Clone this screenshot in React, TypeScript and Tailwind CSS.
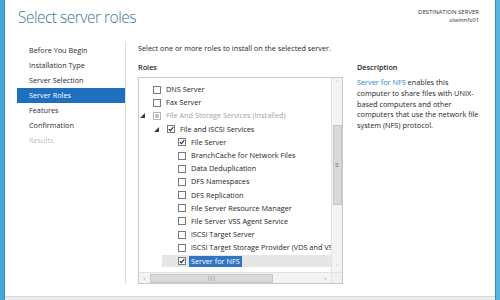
import React from "react";

const font = { fontFamily: '"Open Sans", "Noto Sans", "Liberation Sans", sans-serif' };

type Row = {
  label: string;
  level: number;
  state: "off" | "on" | "mixed";
  expander?: boolean;
  dim?: boolean;
  selected?: boolean;
};

const rows: Row[] = [
  { label: "DNS Server", level: 0, state: "off" },
  { label: "Fax Server", level: 0, state: "off" },
  { label: "File And Storage Services (Installed)", level: 0, state: "mixed", expander: true, dim: true },
  { label: "File and iSCSI Services", level: 1, state: "on", expander: true },
  { label: "File Server", level: 2, state: "on" },
  { label: "BranchCache for Network Files", level: 2, state: "off" },
  { label: "Data Deduplication", level: 2, state: "off" },
  { label: "DFS Namespaces", level: 2, state: "off" },
  { label: "DFS Replication", level: 2, state: "off" },
  { label: "File Server Resource Manager", level: 2, state: "off" },
  { label: "File Server VSS Agent Service", level: 2, state: "off" },
  { label: "iSCSI Target Server", level: 2, state: "off" },
  { label: "iSCSI Target Storage Provider (VDS and VSS hardware providers)", level: 2, state: "off" },
  { label: "Server for NFS", level: 2, state: "on", selected: true },
];

const steps = [
  { label: "Before You Begin" },
  { label: "Installation Type" },
  { label: "Server Selection" },
  { label: "Server Roles", active: true },
  { label: "Features" },
  { label: "Confirmation" },
  { label: "Results", disabled: true },
];

function Expander() {
  return (
    <svg width="5" height="5" viewBox="0 0 5 5" className="shrink-0">
      <path d="M5 0 L5 5 L0 5 Z" fill="#3c3c3c" />
    </svg>
  );
}

function Check({ state, dim }: { state: Row["state"]; dim?: boolean }) {
  return (
    <span
      className={`w-[8px] h-[8px] shrink-0 border bg-white flex items-center justify-center ${
        dim ? "border-[#b5b5b5]" : "border-[#7a7a7a]"
      }`}
    >
      {state === "on" && (
        <svg width="6" height="6" viewBox="0 0 6 6">
          <path d="M0.8 3.1 L2.4 4.7 L5.3 1.2" fill="none" stroke="#262626" strokeWidth="1.1" />
        </svg>
      )}
      {state === "mixed" && <span className="w-[4px] h-[4px] bg-[#c4c4c4]" />}
    </span>
  );
}

function RoleRow({ row }: { row: Row }) {
  const indent = [140, 154, 165][row.level] - 139;
  return (
    <div
      className="h-[13.2px] flex items-center whitespace-nowrap"
      style={{ paddingLeft: row.expander ? indent : indent + 13 }}
    >
      {row.expander && (
        <span className="w-[13px] flex">
          <Expander />
        </span>
      )}
      <div className={`flex items-center h-[12px] pr-[2px] ${row.selected ? "bg-[#e6e6e6] flex-1 -ml-[16px] pl-[16px]" : ""}`}>
        <Check state={row.state} dim={row.dim} />
        <span
          className={`ml-[3px] px-[2px] leading-[11px] ${
            row.selected ? "bg-[#3373c4] text-white" : row.dim ? "text-[#a3a3a3]" : "text-[#1e1e1e]"
          }`}
        >
          {row.label}
        </span>
      </div>
    </div>
  );
}

export default function App() {
  return (
    <div className="w-[500px] h-[300px] flex bg-white overflow-hidden text-[7.3px]" style={font}>
      <div className="w-[5px] bg-[#45a7d9] border-r border-[#2f8fc4]" />
      <div className="flex-1 flex flex-col">
        {/* header */}
        <div className="h-[42px] flex justify-between">
          <h1 className="pl-[13px] pt-[5px] text-[15.5px] font-light text-[#3f7590] tracking-[-0.5px] leading-[24px]">
            Select server roles
          </h1>
          <div className="pr-[16px] pt-[8px] text-right text-[6px] leading-[8px] text-[#333]">
            <div>DESTINATION SERVER</div>
            <div>slwinnfs01</div>
          </div>
        </div>

        {/* body */}
        <div className="flex-1 flex">
          <nav className="w-[120px] pl-[12px] pt-[1px]">
            {steps.map((s) => (
              <div
                key={s.label}
                className={`h-[15px] pl-[12px] flex items-center ${
                  s.active ? "bg-[#1f6fbf] text-white" : s.disabled ? "text-[#c2c2c2]" : "text-[#2b2b2b]"
                }`}
              >
                {s.label}
              </div>
            ))}
          </nav>
          <div className="w-px bg-[#dcdcdc] mb-[12px]" />

          <section className="w-[217px] pl-[12px]">
            <p className="h-[12px] flex items-center text-[#1e1e1e] whitespace-nowrap">
              Select one or more roles to install on the selected server.
            </p>
            <h2 className="mt-[7px] h-[12px] flex items-center font-semibold text-[#1e1e1e]">Roles</h2>
            <div className="mt-[4px] w-[205px] h-[207px] border border-[#c9c9c9] flex flex-col">
              <div className="flex flex-1 min-h-0">
                <div className="flex-1 overflow-hidden pt-[5px]">
                  {rows.map((r) => (
                    <RoleRow key={r.label} row={r} />
                  ))}
                </div>
                {/* vertical scrollbar */}
                <div className="w-[11px] bg-[#f3f3f3] border-l border-[#e2e2e2] flex flex-col items-center">
                  <span className="h-[10px] flex items-center text-[#777] text-[6px]">˄</span>
                  <div className="mt-[37px] w-[9px] h-[80px] bg-[#d9d9d9] border border-[#c8c8c8] flex items-center justify-center">
                    <span className="text-[#666] text-[6px] leading-none">≡</span>
                  </div>
                  <div className="flex-1" />
                  <span className="h-[10px] flex items-center text-[#777] text-[6px]">˅</span>
                </div>
              </div>
              {/* horizontal scrollbar */}
              <div className="h-[11px] flex border-t border-[#e2e2e2]">
                <div className="flex-1 flex items-center bg-[#f3f3f3]">
                  <span className="w-[11px] text-center text-[#777] text-[6px]">‹</span>
                  <div className="w-[123px] h-[9px] bg-[#d9d9d9] border border-[#c8c8c8] flex items-center justify-center">
                    <span className="text-[#666] text-[5px] leading-none">|||</span>
                  </div>
                  <div className="flex-1" />
                  <span className="w-[11px] text-center text-[#777] text-[6px]">›</span>
                </div>
                <div className="w-[11px] bg-[#f0f0f0] border-l border-[#e2e2e2]" />
              </div>
            </div>
          </section>

          <aside className="flex-1 pl-[14px] pr-[4px] pt-[19px] text-[#1e1e1e]">
            <h2 className="h-[12px] flex items-center font-semibold">Description</h2>
            <p className="mt-[4px] leading-[10.8px] whitespace-nowrap">
              <span className="text-[#2b86c5]">Server for NFS</span> enables this
              <br />
              computer to share files with UNIX-
              <br />
              based computers and other
              <br />
              computers that use the network file
              <br />
              system (NFS) protocol.
            </p>
          </aside>
        </div>

        {/* footer */}
        <div className="h-[4px] bg-[#ececec] border-t border-[#d9d9d9]" />
      </div>
      <div className="w-[5px] bg-[#5ab4e0] border-l border-[#2f8fc4]" />
    </div>
  );
}
